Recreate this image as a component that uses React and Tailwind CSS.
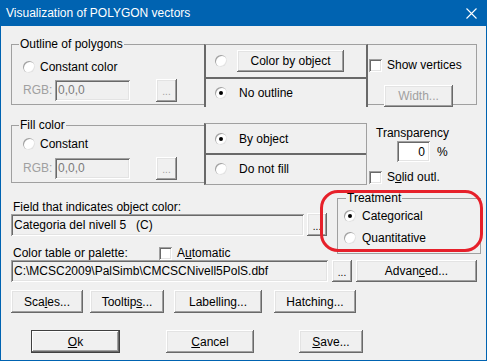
import React from 'react';

const bevel =
  'flex items-center justify-center bg-[#f0f0f0] shadow-[inset_-1px_-1px_#696969,inset_1px_1px_#ffffff,inset_-2px_-2px_#a0a0a0,inset_2px_2px_#e3e3e3]';
const sunken =
  'shadow-[inset_1px_1px_#a0a0a0,inset_-1px_-1px_#ffffff,inset_2px_2px_#696969,inset_-2px_-2px_#e3e3e3]';

const Button = ({ w, h = 22, disabled, children, isDefault }) => (
  <div
    className={
      isDefault
        ? 'flex items-center justify-center shrink-0 bg-[#f0f0f0] shadow-[inset_0_0_0_1px_#404040,inset_-2px_-2px_#696969,inset_2px_2px_#ffffff,inset_-3px_-3px_#a0a0a0]'
        : bevel + ' shrink-0 ' + (disabled ? 'text-[#a0a0a0]' : 'text-black')
    }
    style={{ width: w, height: h }}
  >
    {children}
  </div>
);

const Radio = ({ checked }) => (
  <div className="w-[12px] h-[12px] shrink-0 rounded-full bg-white shadow-[inset_1px_1px_#a0a0a0,inset_-1px_-1px_#e3e3e3] flex items-center justify-center">
    {checked && <div className="w-[4px] h-[4px] rounded-full bg-black" />}
  </div>
);

const Check = () => <div className={'w-[13px] h-[13px] shrink-0 bg-white ' + sunken} />;

const Legend = ({ children, left = 7 }) => (
  <span
    className="absolute top-[-8px] bg-[#f0f0f0] px-[1px] leading-[14px] whitespace-nowrap"
    style={{ left }}
  >
    {children}
  </span>
);

const RgbRow = ({ className }) => (
  <div className={'flex items-center h-[24px] ' + className}>
    <span className="ml-[11px] w-[32px] text-[#a0a0a0]">RGB:</span>
    <div className={'w-[75px] h-[21px] flex items-center pl-[3px] text-[#7a7a7a] ' + sunken}>0,0,0</div>
    <div className="ml-[26px]">
      <Button w={21} h={23} disabled>
        <span className="text-[10px] leading-none mt-[4px]">...</span>
      </Button>
    </div>
  </div>
);

export default function App() {
  return (
    <div className="w-[487px] h-[361px] bg-[#0063b1] flex flex-col font-['Liberation_Sans',Arial,sans-serif] text-[12px] text-black select-none">
      {/* title bar */}
      <div className="h-[26px] flex items-center justify-between text-white">
        <span className="pl-[6px] leading-none">Visualization of POLYGON vectors</span>
        <svg width="11" height="11" viewBox="0 0 11 11" className="mr-[10px]">
          <path d="M0.5 0.5 L10.5 10.5 M10.5 0.5 L0.5 10.5" stroke="#fff" strokeWidth="1.1" />
        </svg>
      </div>

      <div className="mx-[1px] mb-[1px] h-[334px] bg-[#f0f0f0] pl-[10px] flex flex-col">
        {/* outline row */}
        <div className="mt-[18px] h-[63px] flex items-start">
          <div className="relative w-[193px] h-[61px] border-t border-l border-b border-[#a0a0a0]">
            <Legend>Outline of polygons</Legend>
            <div className="mt-[15px] ml-[11px] h-[14px] flex items-center">
              <Radio />
              <span className="ml-[5px]">Constant color</span>
            </div>
            <RgbRow className="mt-[4px]" />
          </div>
          <div className="w-[164px] h-[63px] border-l-2 border-r-2 border-[#696969] border-t border-t-[#a0a0a0] flex flex-col">
            <div className="h-[34px] border-b-2 border-[#696969] flex items-center pl-[9px]">
              <Radio />
              <div className="ml-[10px]">
                <Button w={107}>Color by object</Button>
              </div>
            </div>
            <div className="h-[27px] flex items-center pl-[9px]">
              <Radio checked />
              <span className="ml-[12px]">No outline</span>
            </div>
          </div>
          <div className="w-[109px] h-[61px] border-t border-r border-b border-[#a0a0a0]">
            <div className="mt-[11px] ml-[1px] flex items-center">
              <Check />
              <span className="ml-[5px]">Show vertices</span>
            </div>
            <div className="mt-[11px] ml-[16px]">
              <Button w={69} disabled>Width...</Button>
            </div>
          </div>
        </div>

        {/* fill row */}
        <div className="mt-[16px] h-[62px] flex items-start">
          <div className="relative mt-[2px] w-[193px] h-[58px] border-t border-l border-b border-[#a0a0a0]">
            <Legend>Fill color</Legend>
            <div className="mt-[11px] ml-[11px] h-[14px] flex items-center">
              <Radio />
              <span className="ml-[5px]">Constant</span>
            </div>
            <RgbRow className="mt-[5px]" />
          </div>
          <div className="w-[163px] h-[62px] border-l-2 border-l-[#696969] border-r border-t border-b border-[#a0a0a0] flex flex-col">
            <div className="h-[31px] border-b-2 border-[#696969] flex items-center pl-[9px]">
              <Radio checked />
              <span className="ml-[12px]">By object</span>
            </div>
            <div className="h-[27px] flex items-center pl-[9px]">
              <Radio />
              <span className="ml-[12px]">Do not fill</span>
            </div>
          </div>
          <div className="flex flex-col">
            <span className="mt-[3px] ml-[9px] leading-[14px]">Transparency</span>
            <div className="mt-[1px] ml-[30px] flex items-center">
              <div className={'w-[33px] h-[21px] bg-white flex items-center justify-end pr-[5px] ' + sunken}>0</div>
              <span className="ml-[7px]">%</span>
            </div>
            <div className="mt-[6px] ml-[2px] flex items-center">
              <Check />
              <span className="ml-[5px]">
                S<u>o</u>lid outl.
              </span>
            </div>
          </div>
        </div>

        {/* field + treatment */}
        <div className="relative mt-[5px] h-[70px] flex items-start">
          <div className="w-[316px] flex flex-col">
            <span className="mt-[10px] ml-[2px] h-[13px] leading-[14px]">Field that indicates object color:</span>
            <div className="h-[23px] flex items-center">
              <div className={'w-[293px] h-[22px] flex items-center pl-[3px] ' + sunken}>
                Categoria del nivell 5&nbsp;&nbsp;&nbsp;(C)
              </div>
              <div className="ml-[3px]">
                <Button w={20} h={23}>
                  <span className="text-[10px] leading-none mt-[4px]">...</span>
                </Button>
              </div>
            </div>
            <div className="mt-[10px] h-[14px] flex items-center">
              <span className="ml-[2px] w-[146px] leading-[14px]">Color table or palette:</span>
              <Check />
              <span className="ml-[5px]">
                A<u>u</u>tomatic
              </span>
            </div>
          </div>
          <div className="relative mt-[8px] ml-[10px] w-[144px] h-[56px] border border-[#a0a0a0]">
            <Legend left={8}>Treatment</Legend>
            <div className="mt-[10px] ml-[6px] h-[14px] flex items-center">
              <Radio checked />
              <span className="ml-[6px]">Categorical</span>
            </div>
            <div className="mt-[8px] ml-[6px] h-[14px] flex items-center">
              <Radio />
              <span className="ml-[6px]">Quantitative</span>
            </div>
          </div>
          <div className="absolute left-[309px] top-0 w-[163px] h-[62px] rounded-[18px] border-[3px] border-[#e6202a] pointer-events-none" />
        </div>

        {/* palette path */}
        <div className="h-[22px] flex items-center">
          <div className={'w-[317px] h-[22px] flex items-center pl-[3px] whitespace-nowrap overflow-hidden ' + sunken}>
            C:\MCSC2009\PalSimb\CMCSCNivell5PolS.dbf
          </div>
          <div className="ml-[4px]">
            <Button w={20}>
              <span className="text-[10px] leading-none mt-[4px]">...</span>
            </Button>
          </div>
          <div className="ml-[4px]">
            <Button w={121}>
              Advan<u>c</u>ed...
            </Button>
          </div>
        </div>

        {/* tool buttons */}
        <div className="mt-[8px] h-[23px] flex items-center">
          <Button w={72} h={23}>
            Sca<u>l</u>es...
          </Button>
          <div className="ml-[7px]">
            <Button w={74} h={23}>
              Tooltip<u>s</u>...
            </Button>
          </div>
          <div className="ml-[10px]">
            <Button w={88} h={23}>Labelling...</Button>
          </div>
          <div className="ml-[12px]">
            <Button w={82} h={23}>Hatching...</Button>
          </div>
        </div>

        {/* dialog buttons */}
        <div className="mt-[17px] h-[23px] flex items-center pl-[20px]">
          <Button w={89} h={23} isDefault>
            <u>O</u>k
          </Button>
          <div className="ml-[46px]">
            <Button w={88} h={23}>
              <u>C</u>ancel
            </Button>
          </div>
          <div className="ml-[45px]">
            <Button w={64} h={23}>
              <u>S</u>ave...
            </Button>
          </div>
        </div>
      </div>
    </div>
  );
}
